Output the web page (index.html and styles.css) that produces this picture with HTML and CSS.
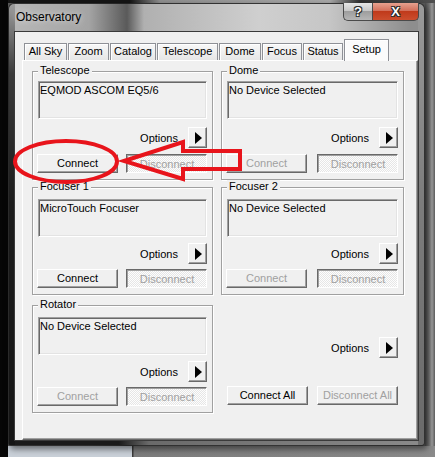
FILE: index.html
```html
<!DOCTYPE html>
<html>
<head>
<meta charset="utf-8">
<link rel="stylesheet" href="styles.css">
</head>
<body>
<div class="desktop">
  <div class="window">
    <div class="titlebar">
      <span class="title">Observatory</span>
      <div class="caption-btns">
        <div class="cbtn help">?</div>
        <div class="cbtn close">X</div>
      </div>
    </div>
    <div class="client">
      <div class="tabs">
        <div class="tab t1">All Sky</div>
        <div class="tab t2">Zoom</div>
        <div class="tab t3">Catalog</div>
        <div class="tab t4">Telescope</div>
        <div class="tab t5">Dome</div>
        <div class="tab t6">Focus</div>
        <div class="tab t7">Status</div>
        <div class="tab t8 sel">Setup</div>
      </div>
      <div class="panel">
        <div class="grid">
          <div class="group first">
            <span class="legend">Telescope</span>
            <div class="field">EQMOD ASCOM EQ5/6</div>
            <div class="opts"><span>Options</span><div class="arrow-btn"><i></i></div></div>
            <div class="btns"><div class="btn">Connect</div><div class="btn pressed">Disconnect</div></div>
          </div>
          <div class="group first">
            <span class="legend">Dome</span>
            <div class="field">No Device Selected</div>
            <div class="opts"><span>Options</span><div class="arrow-btn"><i></i></div></div>
            <div class="btns"><div class="btn disabled">Connect</div><div class="btn pressed">Disconnect</div></div>
          </div>
          <div class="group">
            <span class="legend">Focuser 1</span>
            <div class="field">MicroTouch Focuser</div>
            <div class="opts"><span>Options</span><div class="arrow-btn"><i></i></div></div>
            <div class="btns"><div class="btn">Connect</div><div class="btn pressed">Disconnect</div></div>
          </div>
          <div class="group">
            <span class="legend">Focuser 2</span>
            <div class="field">No Device Selected</div>
            <div class="opts"><span>Options</span><div class="arrow-btn"><i></i></div></div>
            <div class="btns"><div class="btn disabled">Connect</div><div class="btn pressed">Disconnect</div></div>
          </div>
          <div class="group rot">
            <span class="legend">Rotator</span>
            <div class="field">No Device Selected</div>
            <div class="opts"><span>Options</span><div class="arrow-btn"><i></i></div></div>
            <div class="btns"><div class="btn disabled">Connect</div><div class="btn pressed">Disconnect</div></div>
          </div>
          <div class="allcell">
            <div class="opts"><span>Options</span><div class="arrow-btn"><i></i></div></div>
            <div class="btns"><div class="btn">Connect All</div><div class="btn disabled">Disconnect All</div></div>
          </div>
        </div>
      </div>
    </div>
  </div>
  <svg class="annot" width="435" height="457" viewBox="0 0 435 457">
    <ellipse cx="66" cy="161.5" rx="51" ry="20.5" fill="none" stroke="#e8141b" stroke-width="4"/>
    <polygon points="124,161 183,142 183,151 240,151 240,169 183,169 183,179" fill="none" stroke="#e8141b" stroke-width="4" stroke-linejoin="miter"/>
  </svg>
</div>
</body>
</html>
```

FILE: styles.css
```css
* { box-sizing: border-box; }
html, body { margin: 0; padding: 0; }
body {
  width: 435px;
  height: 457px;
  overflow: hidden;
  font-family: "Liberation Sans", Arial, sans-serif;
  font-size: 11px;
  color: #000;
}
.desktop {
  position: relative;
  width: 435px;
  height: 457px;
  padding: 3px 10px 0 8px;
  background:
    linear-gradient(to right, #060606 0, #060606 8px, transparent 8px),
    linear-gradient(to right, #c9d0d8 0, #c9d0d8 132px, #3c3c3c 132px, #3c3c3c 133px, #7c7c7c 134px, #8a8a8a 100%) bottom / 100% 11px no-repeat,
    linear-gradient(to right, #151515 0, #151515 130px, #8e8e8e 160px, #a8a8a8 330px, #303030 360px, #505050 100%) top / 100% 3px no-repeat,
    linear-gradient(to right, #4e4e4e, #6e6e6e 40%, #9a9a9a 70%, #5c5c5c) right / 10px 100% no-repeat;
  background-color: #5a5a5a;
}
.window {
  width: 417px;
  height: 443px;
  border: 1px solid rgba(25, 25, 25, 0.85);
  border-radius: 6px 6px 3px 3px;
  padding: 0 5px 4px 5px;
  display: flex;
  flex-direction: column;
  background:
    linear-gradient(#9c9c9c, #3a3a3a 70px, #1c1c1c 200px, #151515) left / 6px 100% no-repeat,
    linear-gradient(#9a9a9a, #7c7c7c 200px, #6a6a6a) right / 6px 100% no-repeat,
    linear-gradient(to right, #1a1a1a 0, #1a1a1a 110px, #6a6a6a 140px, #8a8a8a 100%) bottom / 100% 6px no-repeat,
    linear-gradient(to right, #b8b8b8 0, #a4a4a4 80px, #5a5a5a 118px, #b0b0b0 135px, #cfcfcf 250px, #c6c6c6 320px, #8e8e8e 400px);
  box-shadow: 2px 3px 6px rgba(0, 0, 0, 0.5);
}
.titlebar {
  height: 27px;
  display: flex;
  align-items: flex-start;
  padding-left: 2px;
}
.title {
  font-size: 12px;
  line-height: 15px;
  margin-top: 6px;
  color: #000;
  text-shadow: 0 0 6px rgba(255, 255, 255, 0.7);
}
.caption-btns {
  margin-left: auto;
  display: flex;
  margin-top: -1px;
}
.cbtn {
  height: 18px;
  border: 1px solid #4a4a4a;
  border-top: none;
  color: #fff;
  font-weight: bold;
  font-size: 13px;
  line-height: 17px;
  text-align: center;
  text-shadow: 0 0 1px #000, 1px 1px 0 #333, -1px -1px 0 #333, 1px -1px 0 #333, -1px 1px 0 #333;
}
.help {
  width: 29px;
  border-radius: 0 0 0 5px;
  border-right: none;
  background: linear-gradient(#e6e6e6, #c8c8c8 45%, #9e9e9e 50%, #b6b6b6);
}
.close {
  width: 47px;
  border-radius: 0 0 5px 0;
  background: linear-gradient(#e7a18f, #d3705b 45%, #c03a1b 50%, #cc4e2e);
}
.client {
  flex: 1;
  background: #f0f0f0;
  border: 1px solid #3a3a3a;
  padding: 7px 0 0 7px;
  display: flex;
  flex-direction: column;
  overflow: hidden;
}
.tabs {
  display: flex;
  height: 21px;
  padding-left: 2px;
  position: relative;
  z-index: 1;
}
.tab {
  height: 17px;
  margin-top: 4px;
  margin-right: 1px;
  border: 1px solid #8e9096;
  border-bottom: none;
  background: linear-gradient(#f8f8f8, #e6e6e6);
  text-align: center;
  line-height: 15px;
  white-space: nowrap;
  box-shadow: inset 1px 1px 0 #fff;
}
.tab.sel {
  height: 22px;
  margin-top: 0;
  padding-top: 2px;
  background: #fbfbfb;
  border-color: #8e9096;
}
.t1 { width: 43px; }
.t2 { width: 41px; }
.t3 { width: 46px; }
.t4 { width: 61px; }
.t5 { width: 42px; }
.t6 { width: 40px; }
.t7 { width: 40px; }
.t8 { width: 45px; }
.panel {
  flex: 1;
  border: 1px solid;
  border-color: #fff #696969 #696969 #fff;
  box-shadow: inset -1px -1px 0 #a0a0a0;
  padding: 10px 0 0 9px;
}
.grid {
  display: grid;
  grid-template-columns: 181px 183px;
  column-gap: 8px;
  row-gap: 7px;
  align-items: start;
}
.group {
  position: relative;
  border: 1px solid #a0a0a0;
  box-shadow: inset 1px 1px 0 #fff, 1px 1px 0 #fff;
  padding: 11px 5px 6px 5px;
}
.group.first { padding-top: 9px; }
.group.rot { margin-top: 3px; }
.legend {
  position: absolute;
  top: -8px;
  left: 5px;
  padding: 0 2px;
  line-height: 13px;
  background: #f0f0f0;
}
.field {
  height: 38px;
  border: 1px solid;
  border-color: #a0a0a0 #fff #fff #a0a0a0;
  box-shadow: inset 1px 1px 0 #696969, inset -1px -1px 0 #e3e3e3;
  padding: 2px 1px;
  line-height: 13px;
  white-space: nowrap;
}
.opts {
  display: flex;
  justify-content: flex-end;
  align-items: center;
  gap: 10px;
  margin-top: 6px;
}
.group.first .opts { margin-top: 8px; }
.arrow-btn {
  width: 19px;
  height: 21px;
  border: 1px solid;
  border-color: #fff #696969 #696969 #fff;
  box-shadow: inset -1px -1px 0 #a0a0a0;
  background: #f0f0f0;
  display: flex;
  align-items: center;
  justify-content: center;
}
.arrow-btn i {
  width: 0;
  height: 0;
  border-left: 7px solid #000;
  border-top: 6px solid transparent;
  border-bottom: 6px solid transparent;
  margin-left: 1px;
}
.btns {
  display: flex;
  justify-content: space-between;
  margin-top: 5px;
  margin-left: -1px;
}
.group.first .btns { margin-top: 6px; }
.btn {
  width: 81px;
  height: 19px;
  border: 1px solid;
  border-color: #fff #696969 #696969 #fff;
  box-shadow: inset -1px -1px 0 #a0a0a0;
  background: #f0f0f0;
  text-align: center;
  line-height: 16px;
  white-space: nowrap;
}
.btn.disabled { color: #a0a0a0; }
.btn.pressed {
  color: #a0a0a0;
  border-color: #696969 #fff #fff #696969;
  box-shadow: inset 1px 1px 0 #a0a0a0;
  background: repeating-conic-gradient(#fdfdfd 0 25%, #e6e6e6 0 50%) 0 0 / 2px 2px;
  padding-top: 1px;
  padding-left: 1px;
}
.allcell {
  padding: 35px 6px 0 6px;
}
.allcell .opts { margin-top: 0; }
.allcell .btns { margin-top: 28px; margin-left: 0; }
.annot {
  position: absolute;
  left: 0;
  top: 0;
  pointer-events: none;
}
```
